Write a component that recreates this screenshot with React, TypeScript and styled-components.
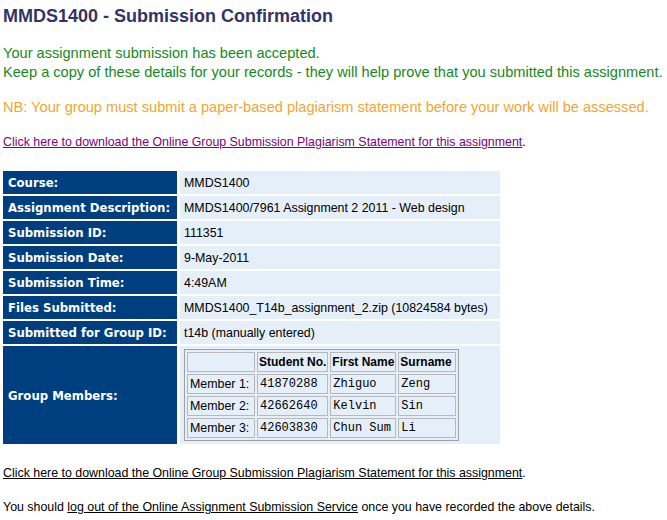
import styled, { createGlobalStyle } from 'styled-components';

const Global = createGlobalStyle`
  body {
    margin: 0;
    padding: 0 3px;
    background: #fff;
    font-family: "Liberation Sans", Arial, sans-serif;
  }
`;

const Title = styled.h1`
  margin: 5px 0 0 0;
  font-size: 18px;
  font-weight: bold;
  color: #333366;
  line-height: 22px;
`;

const Message = styled.p<{ $tone: 'ok' | 'warn' }>`
  margin: 0;
  font-size: 14.6px;
  line-height: 19px;
  color: ${(p) => (p.$tone === 'ok' ? '#15891b' : '#f2a62e')};
`;

const Spaced = styled.div<{ $top: number }>`
  margin-top: ${(p) => p.$top}px;
`;

const Small = styled.p`
  margin: 0;
  font-size: 12.4px;
  line-height: 15px;
  color: #000;
`;

const Link = styled.a<{ $visited?: boolean }>`
  color: ${(p) => (p.$visited ? '#800080' : '#000')};
  text-decoration: underline;
  cursor: pointer;
`;

const Details = styled.table`
  border-collapse: separate;
  border-spacing: 3px 2px;
  margin: 0 -3px;
  table-layout: fixed;
`;

const Label = styled.th`
  width: 164px;
  background: #003f7f;
  color: #fff;
  font-family: "DejaVu Sans Condensed", "DejaVu Sans", Verdana, sans-serif;
  font-size: 13px;
  font-weight: bold;
  text-align: left;
  padding: 0 5px;
  height: 23px;
  white-space: nowrap;
  overflow: hidden;
`;

const Value = styled.td`
  width: 312px;
  background: #e5eff9;
  font-size: 12.4px;
  color: #000;
  padding: 0 4px;
  height: 23px;
  white-space: nowrap;
`;

const Members = styled.table`
  border: 1px solid #a0a0a0;
  border-collapse: separate;
  border-spacing: 2px;
  margin: 3px 0 3px 0;
  table-layout: fixed;
`;

const MHead = styled.th<{ $w: number }>`
  width: ${(p) => p.$w}px;
  border: 1px solid #b8b8b8;
  font-size: 12px;
  font-weight: bold;
  text-align: left;
  padding: 0 1px;
  height: 18px;
  white-space: nowrap;
`;

const MLabel = styled.td`
  border: 1px solid #b8b8b8;
  font-size: 12.4px;
  padding: 0 2px;
  height: 18px;
`;

const MCell = styled.td`
  border: 1px solid #b8b8b8;
  font-family: "Liberation Mono", "Courier New", monospace;
  font-size: 12px;
  padding: 0 2px;
  height: 18px;
  white-space: nowrap;
`;

const rows: [string, string][] = [
  ['Course:', 'MMDS1400'],
  ['Assignment Description:', 'MMDS1400/7961 Assignment 2 2011 - Web design'],
  ['Submission ID:', '111351'],
  ['Submission Date:', '9-May-2011'],
  ['Submission Time:', '4:49AM'],
  ['Files Submitted:', 'MMDS1400_T14b_assignment_2.zip (10824584 bytes)'],
  ['Submitted for Group ID:', 't14b (manually entered)'],
];

const members = [
  ['Member 1:', '41870288', 'Zhiguo', 'Zeng'],
  ['Member 2:', '42662640', 'Kelvin', 'Sin'],
  ['Member 3:', '42603830', 'Chun Sum', 'Li'],
];

export default function App() {
  return (
    <>
      <Global />
      <Title>MMDS1400 - Submission Confirmation</Title>
      <Spaced $top={17}>
        <Message $tone="ok">
          Your assignment submission has been accepted.
          <br />
          Keep a copy of these details for your records - they will help prove that you submitted this assignment.
        </Message>
      </Spaced>
      <Spaced $top={16}>
        <Message $tone="warn">NB: Your group must submit a paper-based plagiarism statement before your work will be assessed.</Message>
      </Spaced>
      <Spaced $top={18}>
        <Small>
          <Link $visited>Click here to download the Online Group Submission Plagiarism Statement for this assignment</Link>.
        </Small>
      </Spaced>
      <Spaced $top={19}>
        <Details>
          <tbody>
            {rows.map(([k, v]) => (
              <tr key={k}>
                <Label>{k}</Label>
                <Value>{v}</Value>
              </tr>
            ))}
            <tr>
              <Label>Group Members:</Label>
              <Value>
                <Members>
                  <tbody>
                    <tr>
                      <MHead $w={64}></MHead>
                      <MHead $w={67}>Student No.</MHead>
                      <MHead $w={62}>First Name</MHead>
                      <MHead $w={54}>Surname</MHead>
                    </tr>
                    {members.map((m) => (
                      <tr key={m[0]}>
                        <MLabel>{m[0]}</MLabel>
                        <MCell>{m[1]}</MCell>
                        <MCell>{m[2]}</MCell>
                        <MCell>{m[3]}</MCell>
                      </tr>
                    ))}
                  </tbody>
                </Members>
              </Value>
            </tr>
          </tbody>
        </Details>
      </Spaced>
      <Spaced $top={20}>
        <Small>
          <Link>Click here to download the Online Group Submission Plagiarism Statement for this assignment</Link>.
        </Small>
      </Spaced>
      <Spaced $top={19}>
        <Small>
          You should <Link>log out of the Online Assignment Submission Service</Link> once you have recorded the above details.
        </Small>
      </Spaced>
    </>
  );
}
